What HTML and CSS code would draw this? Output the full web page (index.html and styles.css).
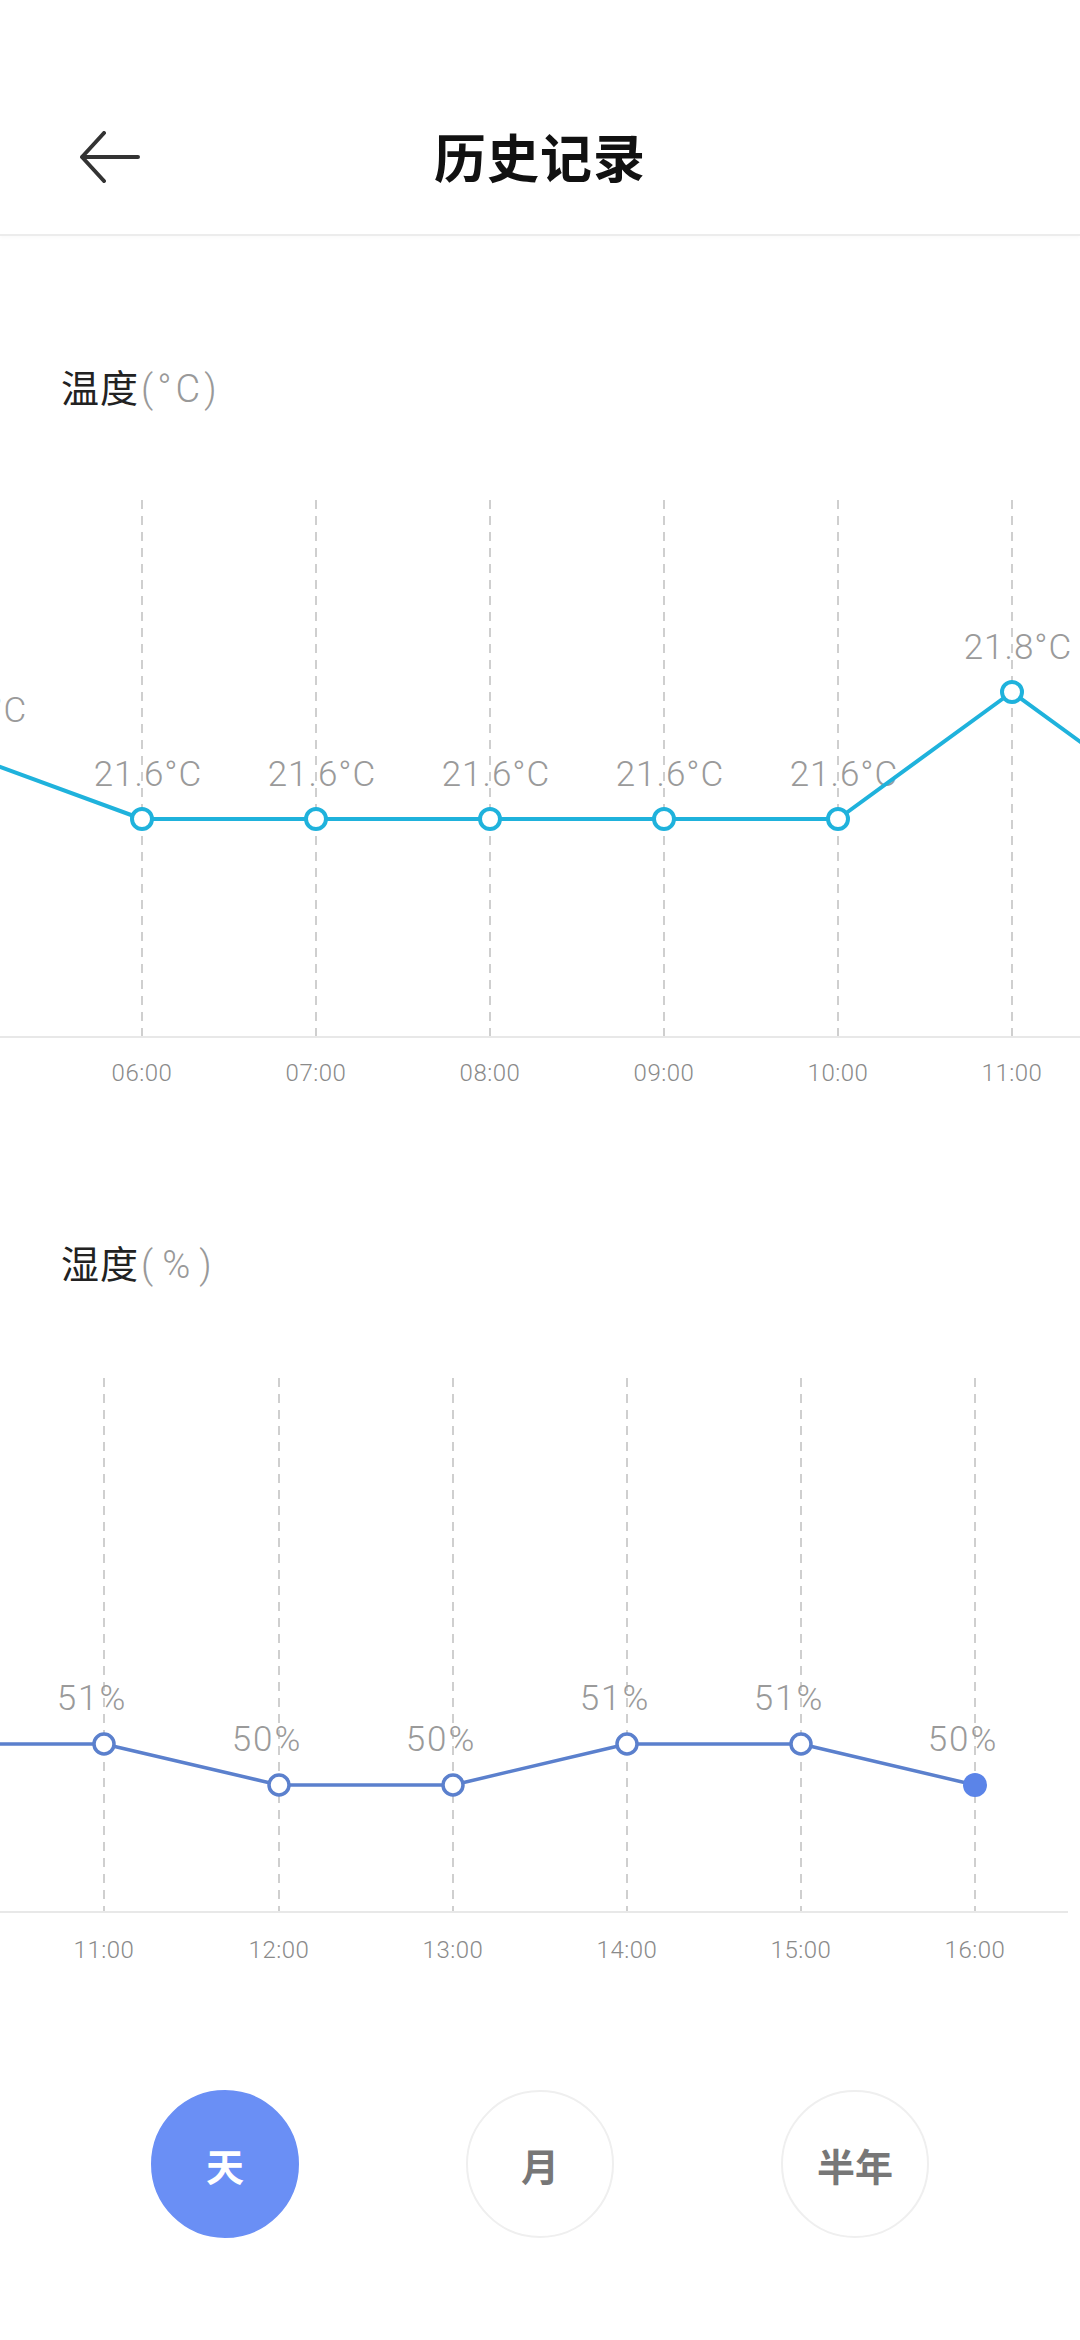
FILE: index.html
```html
<!DOCTYPE html>
<html lang="zh-CN">
<head>
<meta charset="utf-8">
<title>历史记录</title>
<link rel="stylesheet" href="styles.css">
</head>
<body>
<div class="page">
  <header class="header">
    <div class="bar">
      <div class="back">
        <svg width="60" height="52" viewBox="0 0 60 52">
          <path d="M24 2 L2 26 L24 50 M2 26 L58 26" fill="none" stroke="#333" stroke-width="4" stroke-linecap="round" stroke-linejoin="round"/>
        </svg>
      </div>
      <h1 class="title">历史记录</h1>
      <div></div>
    </div>
  </header>

  <section class="chart-section">
    <div class="section-title">温度<span class="unit">(°C)</span></div>
    <svg class="chart" width="1080" height="691" viewBox="0 0 1080 691">
      <g class="grid">
        <line x1="142" y1="91" x2="142" y2="628"/>
        <line x1="316" y1="91" x2="316" y2="628"/>
        <line x1="490" y1="91" x2="490" y2="628"/>
        <line x1="664" y1="91" x2="664" y2="628"/>
        <line x1="838" y1="91" x2="838" y2="628"/>
        <line x1="1012" y1="91" x2="1012" y2="628"/>
      </g>
      <line class="axis" x1="0" y1="628" x2="1080" y2="628"/>
      <g class="vals temp-vals">
        <text x="-27" y="301">21.7°C</text>
        <text x="148" y="365">21.6°C</text>
        <text x="322" y="365">21.6°C</text>
        <text x="496" y="365">21.6°C</text>
        <text x="670" y="365">21.6°C</text>
        <text x="844" y="365">21.6°C</text>
        <text x="1018" y="238">21.8°C</text>
      </g>
      <polyline class="temp-line" points="-32,346 142,410 316,410 490,410 664,410 838,410 1012,283 1186,410"/>
      <g class="temp-dot">
        <circle cx="142" cy="410" r="10"/>
        <circle cx="316" cy="410" r="10"/>
        <circle cx="490" cy="410" r="10"/>
        <circle cx="664" cy="410" r="10"/>
        <circle cx="838" cy="410" r="10"/>
        <circle cx="1012" cy="283" r="10"/>
      </g>
      <g class="xlabels">
        <text x="142" y="664">06:00</text>
        <text x="316" y="664">07:00</text>
        <text x="490" y="664">08:00</text>
        <text x="664" y="664">09:00</text>
        <text x="838" y="664">10:00</text>
        <text x="1012" y="664">11:00</text>
      </g>
    </svg>
  </section>

  <section class="chart-section hum">
    <div class="section-title">湿度<span class="unit wide">(%)</span></div>
    <svg class="chart" width="1080" height="715" viewBox="0 0 1080 715">
      <g class="grid">
        <line x1="104" y1="93" x2="104" y2="627"/>
        <line x1="279" y1="93" x2="279" y2="627"/>
        <line x1="453" y1="93" x2="453" y2="627"/>
        <line x1="627" y1="93" x2="627" y2="627"/>
        <line x1="801" y1="93" x2="801" y2="627"/>
        <line x1="975" y1="93" x2="975" y2="627"/>
      </g>
      <line class="axis" x1="0" y1="627" x2="1068" y2="627"/>
      <g class="vals hum-vals">
        <text x="92" y="413">51%</text>
        <text x="267" y="454">50%</text>
        <text x="441" y="454">50%</text>
        <text x="615" y="413">51%</text>
        <text x="789" y="413">51%</text>
        <text x="963" y="454">50%</text>
      </g>
      <polyline class="hum-line" points="-70,459 104,459 279,500 453,500 627,459 801,459 975,500"/>
      <g class="hum-dot">
        <circle cx="104" cy="459" r="10"/>
        <circle cx="279" cy="500" r="10"/>
        <circle cx="453" cy="500" r="10"/>
        <circle cx="627" cy="459" r="10"/>
        <circle cx="801" cy="459" r="10"/>
      </g>
      <circle class="hum-dot-active" cx="975" cy="500" r="12"/>
      <g class="xlabels">
        <text x="104" y="665">11:00</text>
        <text x="279" y="665">12:00</text>
        <text x="453" y="665">13:00</text>
        <text x="627" y="665">14:00</text>
        <text x="801" y="665">15:00</text>
        <text x="975" y="665">16:00</text>
      </g>
    </svg>
  </section>

  <nav class="periods">
    <div class="period active">天</div>
    <div class="period">月</div>
    <div class="period">半年</div>
  </nav>
</div>
</body>
</html>
```

FILE: styles.css
```css
* { box-sizing: border-box; }
html, body {
  margin: 0;
  padding: 0;
  background: #fff;
}
body {
  width: 1080px;
  height: 2340px;
  overflow: hidden;
  font-family: "Noto Sans CJK SC", "Noto Sans", sans-serif;
}
.page {
  width: 1080px;
  display: flex;
  flex-direction: column;
}
.header {
  height: 236px;
  border-bottom: 2px solid #ececec;
  box-shadow: 0 2px 4px rgba(0,0,0,0.025);
  padding-top: 110px;
}
.bar {
  height: 92px;
  display: grid;
  grid-template-columns: 1fr auto 1fr;
  align-items: center;
}
.back {
  padding-left: 80px;
  display: flex;
  align-items: center;
  height: 92px;
}
.back svg { display: block; margin-top: 2px; }
.title {
  margin: 0;
  font-size: 52px;
  font-weight: 700;
  color: #111;
  line-height: 92px;
  letter-spacing: 1px;
}
.chart-section {
  display: flex;
  flex-direction: column;
}
.section-title {
  margin-top: 127px;
  margin-left: 61px;
  font-size: 38px;
  line-height: 46px;
  height: 46px;
  color: #222;
  letter-spacing: 1px;
}
.hum .section-title { margin-top: 139px; }
.unit {
  font-family: Roboto, "Noto Sans", sans-serif;
  font-weight: 300;
  color: #999;
  letter-spacing: 4px;
  margin-left: 2px;
}
.unit.wide { letter-spacing: 9px; }
.chart {
  display: block;
  overflow: hidden;
}
.grid line {
  stroke: #cfcfcf;
  stroke-width: 2;
  stroke-dasharray: 9 7;
}
.axis {
  stroke: #e8e8e8;
  stroke-width: 2;
}
.vals text {
  font-family: Roboto, "Noto Sans", sans-serif;
  font-weight: 300;
  font-size: 35px;
  fill: #9a9a9a;
  text-anchor: middle;
  dominant-baseline: central;
}
.temp-vals text { letter-spacing: 1px; }
.hum-vals text { letter-spacing: 2px; }
.xlabels text {
  font-family: Roboto, "Noto Sans", sans-serif;
  font-weight: 300;
  font-size: 24px;
  fill: #8a8a8a;
  text-anchor: middle;
  dominant-baseline: central;
  letter-spacing: 0.5px;
}
.temp-line {
  fill: none;
  stroke: #1fb2dc;
  stroke-width: 4;
  stroke-linejoin: round;
}
.temp-dot circle {
  fill: #fff;
  stroke: #1fb2dc;
  stroke-width: 4;
}
.hum-line {
  fill: none;
  stroke: #5b80cd;
  stroke-width: 3.5;
  stroke-linejoin: round;
}
.hum-dot circle {
  fill: #fff;
  stroke: #5b80cd;
  stroke-width: 3.5;
}
.hum-dot-active {
  fill: #5b84e8;
}
.periods {
  margin-top: 90px;
  display: flex;
  justify-content: center;
  gap: 167px;
}
.period {
  width: 148px;
  height: 148px;
  border-radius: 50%;
  border: 2px solid #efefef;
  display: flex;
  align-items: center;
  justify-content: center;
  font-size: 38px;
  font-weight: 700;
  color: #777;
  background: #fff;
}
.period.active {
  background: #6a8ff5;
  border-color: #6a8ff5;
  color: #fff;
}
```
